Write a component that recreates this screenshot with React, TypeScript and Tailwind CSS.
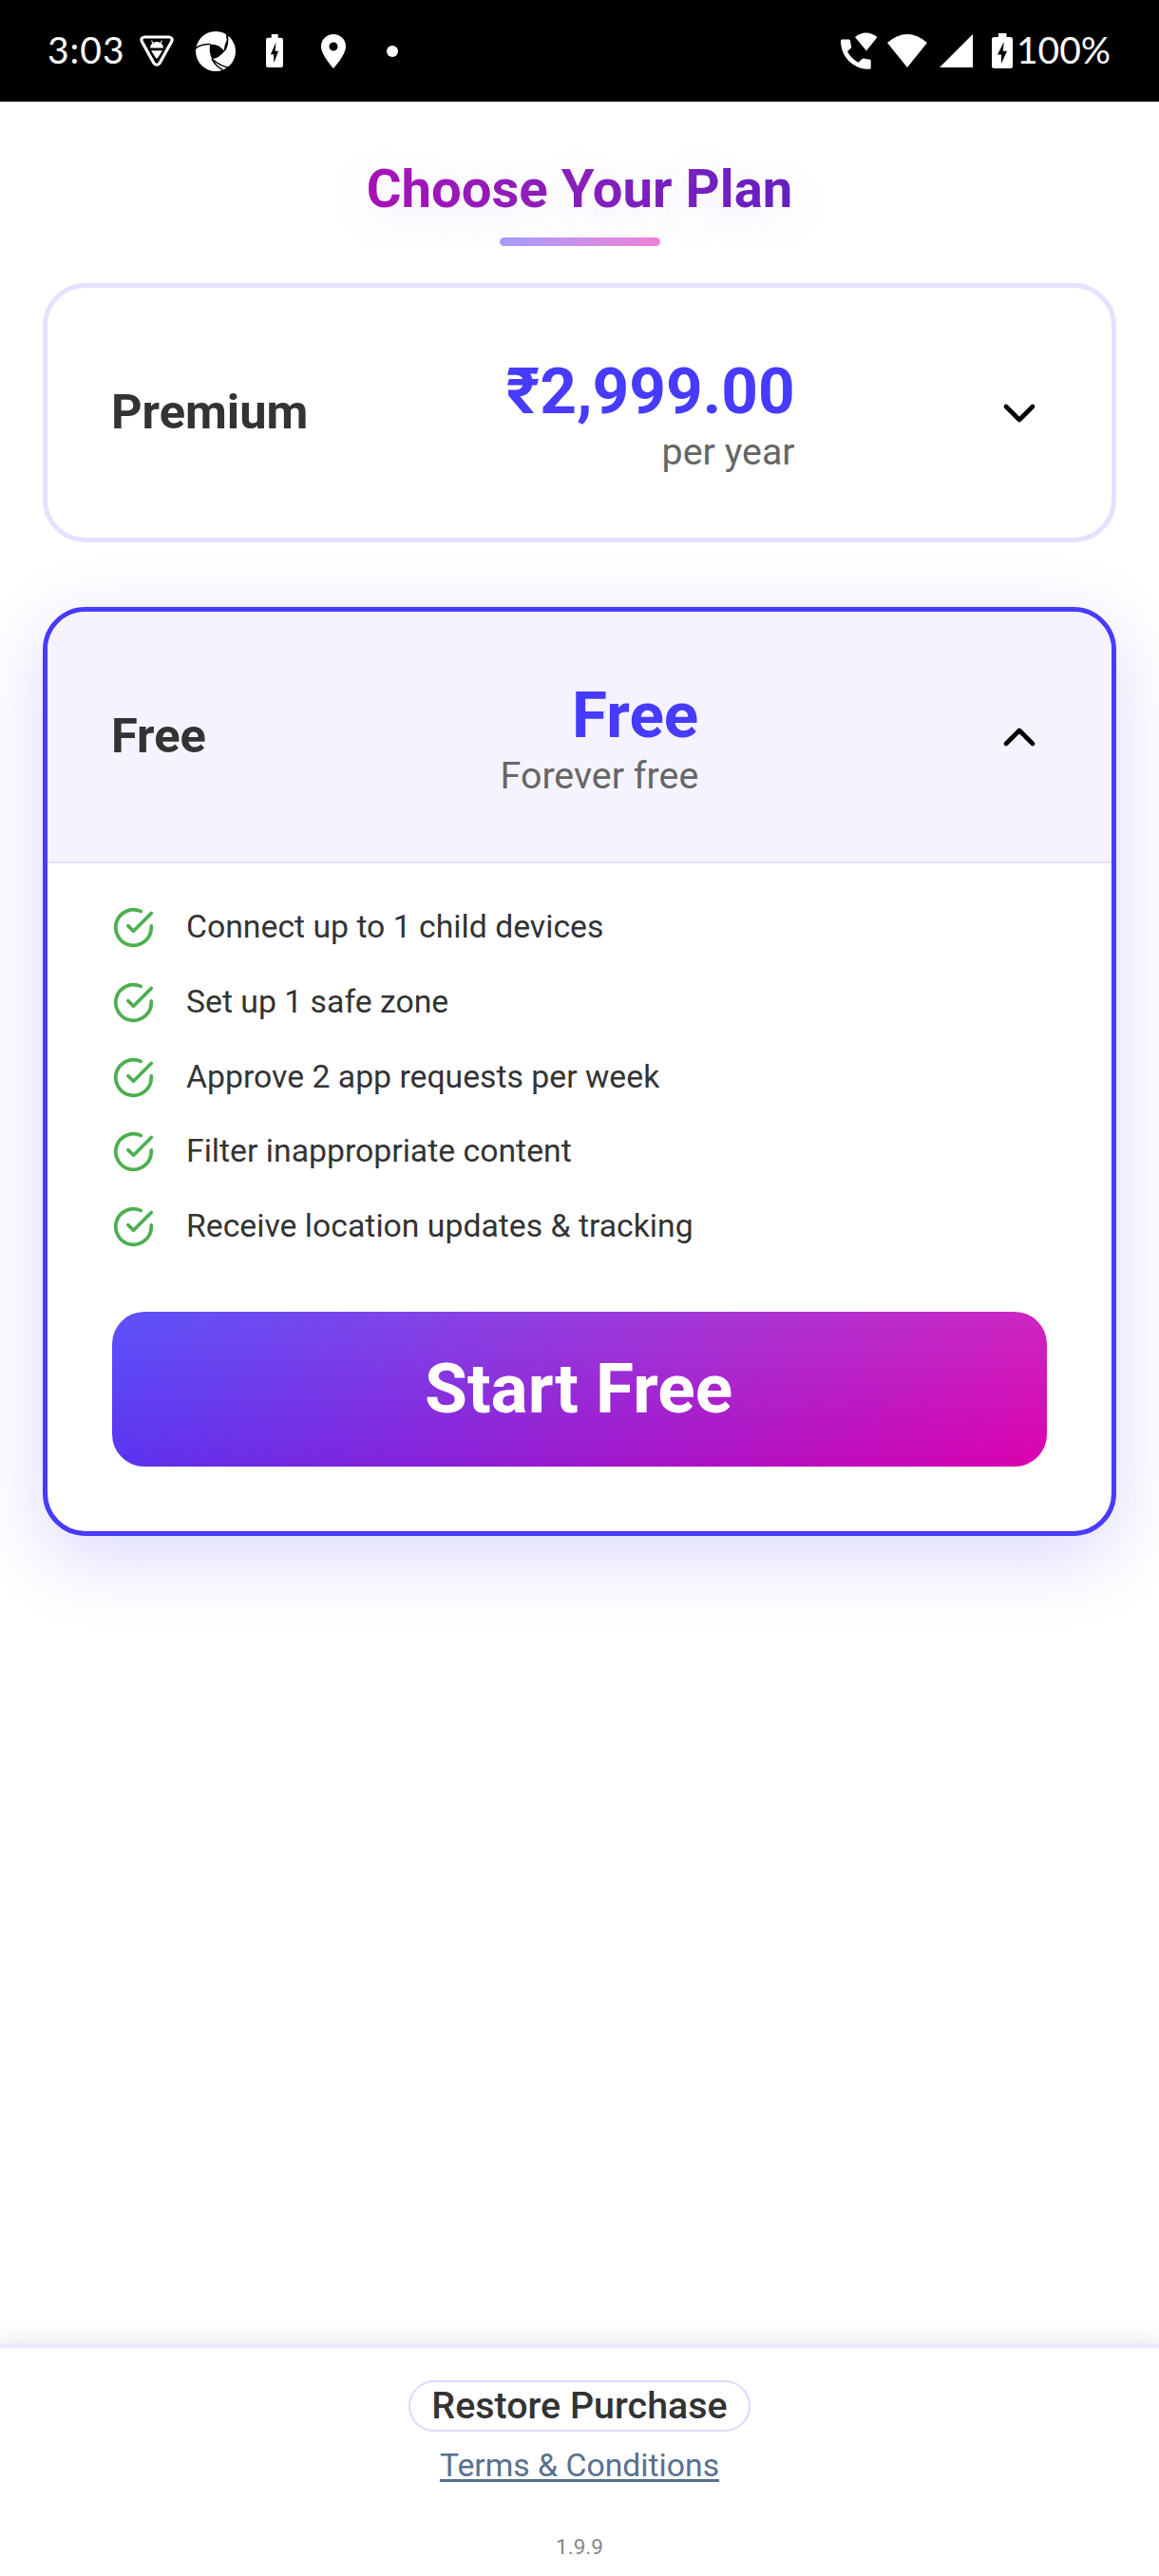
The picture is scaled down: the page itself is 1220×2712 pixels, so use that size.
import React from "react";

type Plan = {
  name: string;
  price: string;
  period: string;
  open: boolean;
  features: string[];
  cta: string;
};

const plans: Plan[] = [
  { name: "Premium", price: "₹2,999.00", period: "per year", open: false, features: [], cta: "" },
  {
    name: "Free",
    price: "Free",
    period: "Forever free",
    open: true,
    features: [
      "Connect up to 1 child devices",
      "Set up 1 safe zone",
      "Approve 2 app requests per week",
      "Filter inappropriate content",
      "Receive location updates & tracking",
    ],
    cta: "Start Free",
  },
];

function Battery({ className }: { className: string }) {
  return (
    <svg viewBox="0 0 22 37" className={className} preserveAspectRatio="none" fill="#fff">
      <path d="M7 0h8.500v4H19.500Q22 4 22 6.500v28Q22 37 19.500 37h-17Q0 37 0 34.500v-28Q0 4 2.500 4H7z" />
      <path d="M12.800 9 6 22.500h4V32l6-13.300h-4.200z" fill="#000" />
    </svg>
  );
}

function BugShield() {
  return (
    <svg viewBox="0 0 36 33" className="ml-[18px] h-[33px] w-9" fill="none">
      <path d="M5 2h26q4.500.800 2.500 5L21 29.500q-3 3.500-6 0L2.500 7Q.500 2.800 5 2z" stroke="#fff" strokeWidth="3.200" />
      <path d="M11 13.500q.500-6 7-6.500 6.500.500 7 6.500z" fill="#fff" />
      <path d="M14 8.500l-1.500-2.800M22 8.500l1.500-2.800" stroke="#fff" strokeWidth="1.200" />
      <path d="M12 16.200h12L19 24q-1 1-2 0z" fill="#fff" />
    </svg>
  );
}

function Aperture() {
  return (
    <svg viewBox="0 0 42 42" className="ml-[23px] size-[42px]">
      <circle cx="21" cy="21" r="21" fill="#fff" />
      <path d="M15.200 13.800Q24 12.500 30.300 21 25 28 17 29 13.500 21 15.200 13.800z" fill="#000" />
      <path
        d="M0 17.800Q6 13.300 15.500 13.600M32.500 1.500Q35.500 12 30.300 20.500M30.300 20.500Q31 14 34 8M17 29Q21 37 28.500 40.500M17 29Q26 37 36.500 38.500"
        stroke="#000"
        strokeWidth="1.500"
        fill="none"
      />
      <path d="M32 0 34.800 4.500 32.500 8zM28 41.500 36.500 38 38 42z" fill="#000" />
    </svg>
  );
}

function StatusBar() {
  return (
    <div className="flex h-[107px] items-center bg-black pr-[49px] pl-[50px] font-['Lato',sans-serif] text-[39px] leading-none text-white">
      <span className="w-[79px] whitespace-nowrap pb-0.5 tracking-[1px]">3:03</span>
      <BugShield />
      <Aperture />
      <Battery className="ml-8 h-[35px] w-[18px]" />
      <svg viewBox="0 0 26 36" className="ml-10 h-9 w-[26px]">
        <path d="M13 0a13 13 0 0 0-13 13c0 9 13 23 13 23s13-14 13-23A13 13 0 0 0 13 0zm0 8.500a4.500 4.500 0 1 1 0 9 4.500 4.500 0 0 1 0-9z" fill="#fff" />
      </svg>
      <span className="ml-[43px] size-3 rounded-full bg-white" />
      <svg viewBox="0 0 39 39" className="ml-auto size-[39px]" fill="#fff">
        <path d="M1.500 7.500h7q1.500 0 1.600 1.500.200 3 1 5.500.400 1.300-.500 2.200L7 20.300q4 7.500 11.700 11.500l3.700-3.700q1-.900 2.200-.500 2.500.800 5.500 1 1.600.100 1.600 1.600v7q0 1.600-1.600 1.600C12 38.800 0 25 0 9q0-1.500 1.500-1.500z" />
        <path d="M15 5q11.500-9 23.500 0L27 19.500z" />
      </svg>
      <svg viewBox="0 0 42 35" className="ml-[10px] h-[35px] w-[42px]">
        <path d="M0 9q21-18 42 0L21 35z" fill="#fff" />
      </svg>
      <svg viewBox="0 0 35 35" className="ml-[13px] size-[35px]">
        <path d="M0 35 35 0v35z" fill="#fff" />
      </svg>
      <Battery className="ml-5 h-[37px] w-[22px]" />
      <span className="ml-[4px] w-[101px] whitespace-nowrap pb-0.5">100%</span>
    </div>
  );
}

function Chevron({ up }: { up: boolean }) {
  return (
    <svg viewBox="0 0 24 24" className="size-14" fill="none" stroke="#000" strokeWidth="2" strokeLinecap="round" strokeLinejoin="round">
      <path d={up ? "m18 15-6-6-6 6" : "m6 9 6 6 6-6"} />
    </svg>
  );
}

function CheckCircle() {
  return (
    <svg viewBox="0 0 24 24" className="size-[45px] shrink-0" fill="none" stroke="#4caf50" strokeWidth="2" strokeLinecap="round" strokeLinejoin="round">
      <path d="M22 11.080V12a10 10 0 1 1-5.930-9.140" />
      <path d="m22 4-10 10.010-3-3" />
    </svg>
  );
}

function PlanCard({ plan }: { plan: Plan }) {
  return (
    <section
      className={
        plan.open
          ? "overflow-hidden rounded-[45px] border-[5px] border-[#473bff] bg-white shadow-[0_22px_80px_rgba(71,59,255,0.2)]"
          : "overflow-hidden rounded-[45px] border-[5px] border-[#e5e1ff] bg-white"
      }
    >
      <div
        className={
          plan.open
            ? "flex h-[265px] items-center justify-between border-b-2 border-[#e5e1ff] bg-[#f5f3ff] pr-[69px] pl-[67px]"
            : "flex h-[263px] items-center justify-between pr-[69px] pl-[67px]"
        }
      >
        <h2 className="pb-0.5 text-[50.600px] leading-[60px] font-bold text-[#333]">{plan.name}</h2>
        <div className="flex flex-col items-end pt-[3px]">
          <span className="text-[67.500px] leading-[79px] font-bold text-[#473bff]">{plan.price}</span>
          <span className="text-[39.400px] leading-[50px] text-[#666]">{plan.period}</span>
        </div>
        <Chevron up={plan.open} />
      </div>
      {plan.open && (
        <div className="px-[68px] pt-[45px] pb-[68px]">
          <ul className="flex flex-col gap-[33.750px]">
            {plan.features.map((f) => (
              <li key={f} className="flex h-[45px] items-center gap-[33px] text-[33.750px] leading-[45px] text-[#333]">
                <CheckCircle />
                <span className="pb-0.5">{f}</span>
              </li>
            ))}
          </ul>
          <button className="mt-[67px] flex h-[163px] w-full items-center justify-center rounded-[34px] bg-[linear-gradient(180deg,rgba(255,255,255,0.12),rgba(255,255,255,0)),linear-gradient(135deg,#473bfa,#dc00ae)] pr-0.5 text-[73px] font-bold text-white">
            {plan.cta}
          </button>
        </div>
      )}
    </section>
  );
}

export default function App() {
  return (
    <div className="flex h-[2712px] w-[1220px] flex-col overflow-hidden bg-white font-['Roboto',sans-serif]">
      <StatusBar />
      <header className="flex h-[191px] flex-col items-center pt-[58px]">
        <h1 className="bg-linear-to-r from-[#aa12b7] to-[#6822c2] bg-clip-text text-[56.250px] leading-[68px] font-bold text-transparent [text-shadow:0_11px_56px_rgba(120,40,200,0.14)]">
          Choose Your Plan
        </h1>
        <div className="mt-[17px] h-[9px] w-[169px] rounded-full bg-linear-to-r from-[#a39cff] to-[#ee80d5]" />
      </header>
      <main className="flex flex-1 flex-col gap-[68px] px-[45px]">
        {plans.map((p) => (
          <PlanCard key={p.name} plan={p} />
        ))}
      </main>
      <footer className="flex h-[245px] flex-col items-center border-t-[5px] border-[#ebe9ff] bg-white pt-[34px] shadow-[0_-3px_22px_rgba(0,0,0,0.1)]">
        <button className="flex h-[54px] w-[360px] items-center justify-center rounded-full border-2 border-[#dcd8ff] text-[39.400px] font-medium text-[#333]">
          Restore Purchase
        </button>
        <a className="mt-[16px] text-[33.750px] leading-[40px] text-[#58718f] underline decoration-[3px] underline-offset-[3px]">Terms &amp; Conditions</a>
        <span className="mt-[52px] text-[22.500px] leading-[27px] text-[#888]">1.9.9</span>
      </footer>
    </div>
  );
}
